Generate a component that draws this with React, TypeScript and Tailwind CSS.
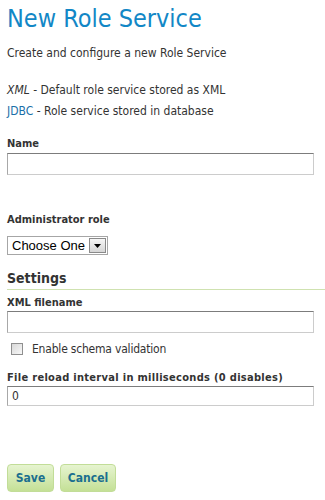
import React from "react";

const F = { fontFamily: '"DejaVu Sans Condensed", "DejaVu Sans", Verdana, sans-serif' };

function TextInput({ value = "", h = "h-[22px]" }: { value?: string; h?: string }) {
  return (
    <div className={`${h} w-[307px] border border-[#cccccc] border-t-[#7c7c7c] border-l-[#a8a8a8] bg-white pl-[4px] text-[12px] leading-[18px] text-[#333]`}>
      {value}
    </div>
  );
}

export default function App() {
  return (
    <div className="w-[325px] h-[500px] bg-white text-[#333] overflow-hidden" style={F}>
      <div className="pl-[7px]">
        <h1 className="text-[25px] leading-[28px] text-[#1287c6] pt-[5px]">New Role Service</h1>
        <p className="text-[12px] leading-[16px] mt-[12px]">Create and configure a new Role Service</p>
        <p className="text-[12px] leading-[16px] mt-[21px]"><i>XML</i> - Default role service stored as XML</p>
        <p className="text-[12px] leading-[16px] mt-[5px]"><span className="text-[#1a6fa8]">JDBC</span> - Role service stored in database</p>

        <div className="mt-[18px] text-[11px] font-bold leading-[14px]">Name</div>
        <div className="mt-[2px]"><TextInput /></div>

        <div className="mt-[38px] text-[11px] font-bold leading-[14px]">Administrator role</div>
        <div className="mt-[9px] flex h-[19px] w-[101px] items-center border border-[#a6a6a6] bg-white">
          <span className="flex-1 pl-[4px] text-[13px] leading-[17px] text-black" style={{ fontFamily: '"Liberation Sans", Arial, sans-serif' }}>Choose One</span>
          <span className="mr-[1px] flex h-[15px] w-[17px] items-center justify-center border border-[#8a8a8a] bg-gradient-to-b from-[#f6f6f6] to-[#d6d6d6]">
            <svg width="7" height="4" viewBox="0 0 7 4"><path d="M0 0h7L3.5 4z" fill="#000" /></svg>
          </span>
        </div>

        <div className="mt-[14px] border-b border-[#cfe2b0] pb-[2px] text-[14px] font-bold leading-[18px]">Settings</div>
        <div className="mt-[6px] text-[11px] font-bold leading-[14px]">XML filename</div>
        <div className="mt-[1px]"><TextInput /></div>

        <div className="mt-[8px] flex h-[16px] items-center">
          <span className="ml-[4px] h-[12px] w-[12px] border border-[#8f8f8f] bg-gradient-to-br from-[#d8d8d8] to-[#f8f8f8]" />
          <span className="ml-[9px] text-[12px] leading-[16px] tracking-[-0.2px]">Enable schema validation</span>
        </div>

        <div className="mt-[14px] text-[11px] font-bold leading-[14px] tracking-[0.3px]">File reload interval in milliseconds (0 disables)</div>
        <div className="mt-[1px]"><TextInput value="0" h="h-[20px]" /></div>

        <div className="mt-[58px] flex gap-[6px]">
          <button className="h-[28px] w-[47px] rounded-[4px] border border-[#c2dd98] bg-gradient-to-b from-[#e6f4d0] to-[#c4e096] text-[12px] font-bold text-[#1b6f8f]">Save</button>
          <button className="h-[28px] w-[56px] rounded-[4px] border border-[#c2dd98] bg-gradient-to-b from-[#e6f4d0] to-[#c4e096] text-[12px] font-bold text-[#1b6f8f]">Cancel</button>
        </div>
      </div>
    </div>
  );
}
